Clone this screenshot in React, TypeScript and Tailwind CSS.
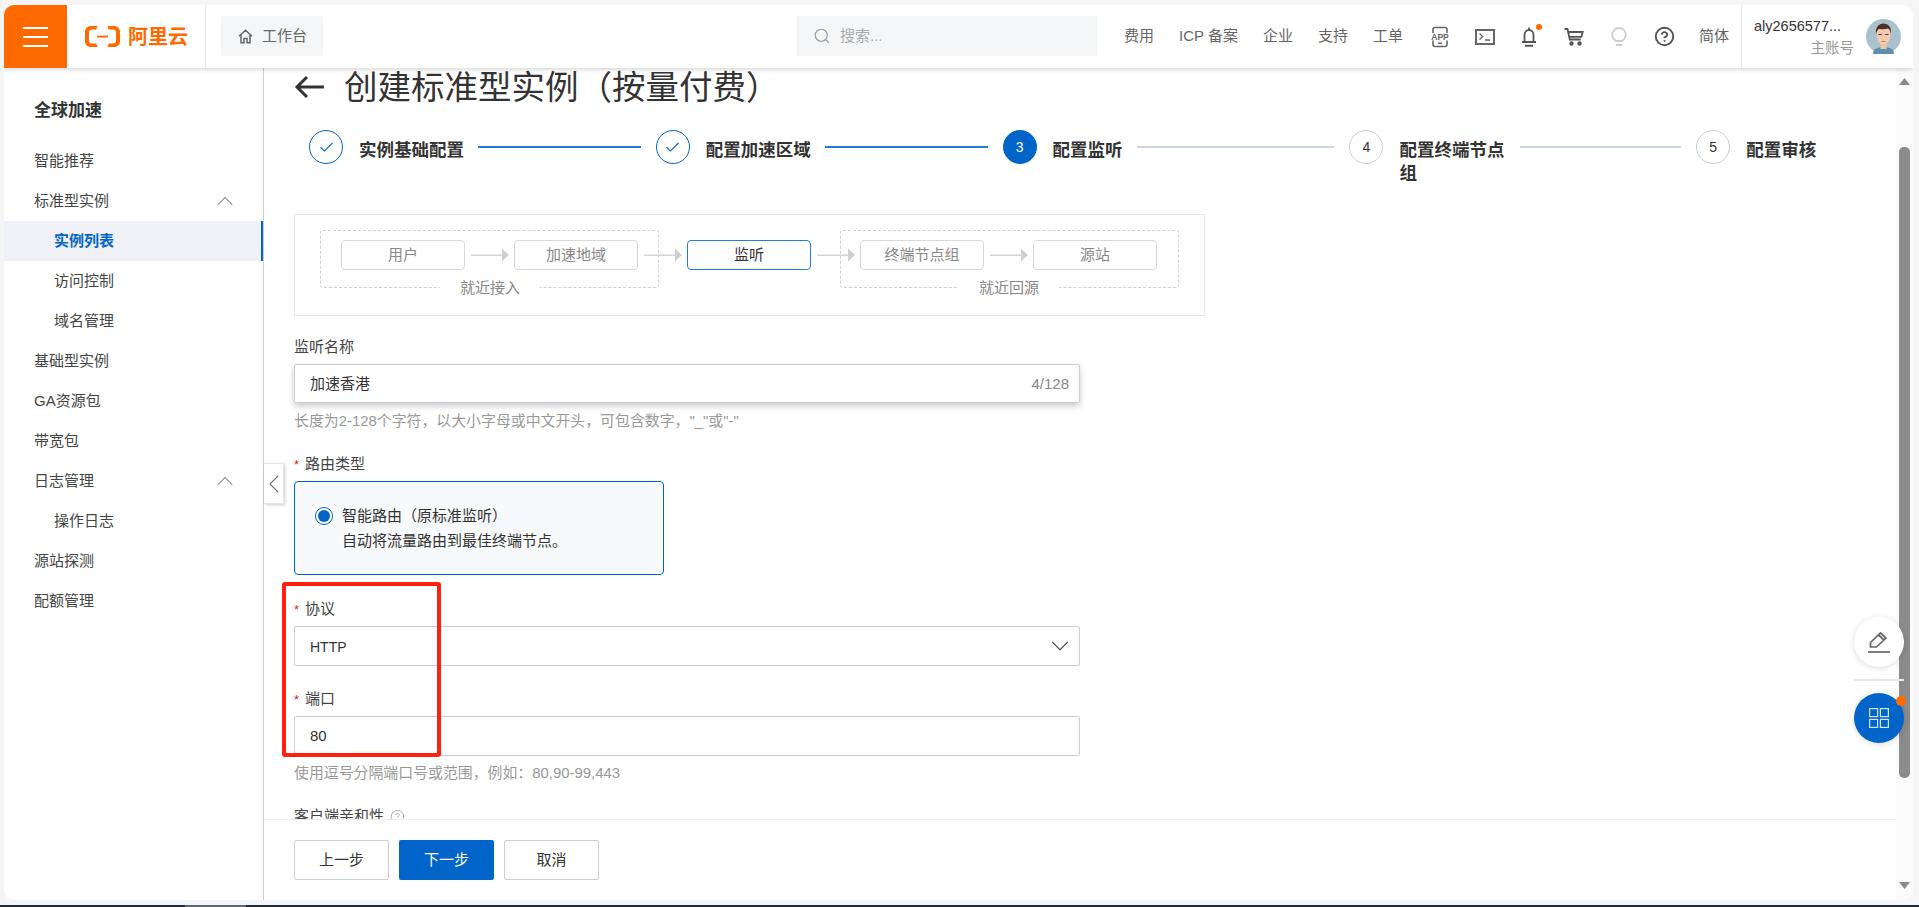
import { Check, ChevronDown, ChevronLeft, ChevronUp, CircleHelp, Search } from 'lucide-react';

const sideItems = [
  { label: '智能推荐' },
  { label: '标准型实例', open: true },
  { label: '实例列表', sub: true, active: true },
  { label: '访问控制', sub: true },
  { label: '域名管理', sub: true },
  { label: '基础型实例' },
  { label: 'GA资源包' },
  { label: '带宽包' },
  { label: '日志管理', open: true },
  { label: '操作日志', sub: true },
  { label: '源站探测' },
  { label: '配额管理' },
];

const steps = [
  { label: '实例基础配置', state: 'done' },
  { label: '配置加速区域', state: 'done' },
  { label: '配置监听', state: 'current', num: 3 },
  { label: '配置终端节点组', state: 'todo', num: 4 },
  { label: '配置审核', state: 'todo', num: 5 },
];

const flowNodes = ['用户', '加速地域', '监听', '终端节点组', '源站'];

function AliyunLogo() {
  return (
    <svg width="35" height="21" viewBox="0 0 35 21" fill="#ff6a00">
      <path d="M12.5 0H6C2.6 0 0 2.5 0 5.5v10C0 18.5 2.6 21 6 21h6.5l-1.2-3.4H7.2C5.4 17.6 4 16.4 4 15V6c0-1.4 1.4-2.6 3.2-2.6h4.1z" />
      <path d="M22.5 0H29c3.4 0 6 2.5 6 5.5v10c0 3-2.6 5.5-6 5.5h-6.5l1.2-3.4h4.1c1.8 0 3.2-1.2 3.2-2.6V6c0-1.4-1.4-2.6-3.2-2.6h-4.1z" />
      <rect x="12" y="9.6" width="11" height="1.9" />
    </svg>
  );
}

function HomeIcon() {
  return (
    <svg width="15" height="15" viewBox="0 0 15 15" fill="none" stroke="#666" strokeWidth="1.5">
      <path d="M1 7.2 7.5 1.2 14 7.2M3 6v7.8h3V9.5h3v4.3h3V6" />
    </svg>
  );
}

function AppIcon() {
  return (
    <svg width="22" height="22" viewBox="0 0 22 22" fill="none">
      <rect x="4" y="1.5" width="14" height="19" rx="2" stroke="#666" strokeWidth="1.6" />
      <rect x="0" y="7" width="22" height="7.500" fill="#fff" />
      <rect x="9" y="16.500" width="4" height="1.600" fill="#666" />
      <text x="11" y="14" textAnchor="middle" fontSize="8.500" fontWeight="700" fill="#666" fontFamily="Liberation Sans">APP</text>
    </svg>
  );
}

function TerminalIcon() {
  return (
    <svg width="20" height="16" viewBox="0 0 20 16" fill="none" stroke="#666">
      <rect x="1" y="1" width="18" height="14" strokeWidth="2" />
      <path d="m4.5 4.5 3.2 3-3.2 3" strokeWidth="1.3" />
      <path d="M10 11h5" strokeWidth="1.3" />
    </svg>
  );
}

function BellIcon() {
  return (
    <svg width="16" height="20" viewBox="0 0 16 20" fill="none" stroke="#555" strokeWidth="1.8">
      <path d="M8 0.500v2.500M3.500 14.500V8c0-3 2-5 4.500-5s4.500 2 4.500 5v6.500M1 15h14" />
      <path d="M4 18.800h8" strokeWidth="2" />
    </svg>
  );
}

function CartIcon() {
  return (
    <svg width="20" height="18" viewBox="0 0 20 18" fill="none" stroke="#555" strokeWidth="1.8">
      <path d="M0.500 1h3l2.300 10.500h11" />
      <path d="M4.200 4h14.500l-1.300 4.800H5.400" />
      <circle cx="7.500" cy="15.500" r="1.300" fill="#555" />
      <circle cx="15.500" cy="15.500" r="1.300" fill="#555" />
    </svg>
  );
}

function BulbIcon() {
  return (
    <svg width="16" height="20" viewBox="0 0 16 20" fill="none" stroke="#c9ced6" strokeWidth="1.8">
      <path d="M5 14C3 12.500 1.200 10.600 1.200 7.800 1.200 3.800 4.200 1 8 1s6.800 2.800 6.800 6.800c0 2.800-1.800 4.700-3.800 6.200z" />
      <path d="M5 18h6" />
    </svg>
  );
}

function Avatar() {
  return (
    <svg width="35" height="35" viewBox="0 0 35 35">
      <circle cx="17.500" cy="17.500" r="17.500" fill="#a9c2cd" />
      <path d="M7 35c0-5 4-7 10.500-7S28 30 28 35z" fill="#5f8fb0" />
      <rect x="14.500" y="23" width="6" height="7" fill="#f1c3a5" />
      <ellipse cx="17.500" cy="16" rx="7" ry="9.500" fill="#f5c9ad" />
      <path d="M10 15c-.8-7 3-10.500 7.500-10.500S25.800 8 25 15c-.6-3-1.500-5-3-5.500-2.500 1-6 1-8.500.2-1.500.8-2.800 2.300-3.500 5.300z" fill="#4a2f24" />
      <rect x="12.500" y="15" width="3.200" height="1" fill="#4a2f24" />
      <rect x="19.300" y="15" width="3.200" height="1" fill="#4a2f24" />
      <rect x="15.500" y="22" width="4" height="0.800" fill="#b5705a" />
    </svg>
  );
}

function Arrow() {
  return (
    <svg className="mx-[5.5px] shrink-0" width="38" height="14" viewBox="0 0 38 14">
      <rect x="0" y="6.500" width="32" height="1.500" fill="#d4d4d4" />
      <polygon points="31,0.500 38,7 31,13.500" fill="#cfcfcf" />
    </svg>
  );
}

function Required({ children }: { children: string }) {
  return (
    <div className="flex items-center h-[20px] pt-[2px] text-[15px] text-[#444]">
      <span className="text-[#e0202a] mr-[6px] text-[13px] leading-none">*</span>
      {children}
    </div>
  );
}

export default function App() {
  return (
    <div
      className="relative w-screen h-screen overflow-hidden bg-[#f5f5f5] flex flex-col text-[15px] text-[#333]"
      style={{ fontFamily: '"Liberation Sans", "Noto Sans CJK SC", sans-serif' }}
    >
      <div className="mt-[5px] ml-[4px] w-[1909px] h-[895px] shrink-0 bg-white rounded-[10px] overflow-hidden flex flex-col">
        {/* Top bar */}
        <header className="relative z-20 h-[63px] shrink-0 bg-white flex items-stretch shadow-[0_1px_5px_rgba(0,0,0,0.2)]">
          <div className="w-[63px] bg-[#ff6a00] flex flex-col justify-center items-center gap-[7px]">
            <span className="block w-[25px] h-[2px] bg-white" />
            <span className="block w-[25px] h-[2px] bg-white" />
            <span className="block w-[25px] h-[2px] bg-white" />
          </div>
          <div className="w-[139px] border-r border-[#e8e8e8] flex items-center pl-[18px] gap-[8px]">
            <AliyunLogo />
            <span className="text-[20px] leading-none font-bold text-[#ff6a00]">阿里云</span>
          </div>
          <div className="ml-[15px] mt-[11px] w-[102px] h-[40px] bg-[#f4f5f7] rounded-[3px] flex items-center pl-[17px] gap-[9px] text-[#666]">
            <HomeIcon />
            工作台
          </div>
          <div className="ml-[474px] mt-[11px] w-[300px] h-[40px] bg-[#f4f5f7] flex items-center pl-[16px] gap-[9px] text-[#aaa]">
            <Search size={18} strokeWidth={1.5} color="#999" />
            搜索...
          </div>
          <nav className="ml-[27px] flex items-center text-[#666]">
            <div className="flex gap-[25px] whitespace-nowrap mr-[15px]">
              <span>费用</span>
              <span>ICP 备案</span>
              <span>企业</span>
              <span>支持</span>
              <span>工单</span>
            </div>
            <div className="w-[45px] flex justify-center"><AppIcon /></div>
            <div className="w-[44px] flex justify-center"><TerminalIcon /></div>
            <div className="relative w-[45px] flex justify-center">
              <BellIcon />
              <span className="absolute left-[29px] -top-[3px] w-[6px] h-[6px] rounded-full bg-[#ff6a00]" />
            </div>
            <div className="w-[45px] flex justify-center"><CartIcon /></div>
            <div className="w-[45px] flex justify-center"><BulbIcon /></div>
            <div className="w-[45px] flex justify-center"><CircleHelp size={21} strokeWidth={2.2} color="#555" /></div>
            <span className="ml-[12px] whitespace-nowrap">简体</span>
          </nav>
          <div className="ml-[12px] flex-1 border-l border-[#e8e8e8] flex items-center pl-[12px] pr-[12px]">
            <div className="w-[100px] flex flex-col items-end">
              <span className="self-start text-[14.5px] text-[#333] leading-[20px] whitespace-nowrap">aly2656577...</span>
              <span className="text-[14.5px] text-[#999] leading-[20px] mt-[2px]">主账号</span>
            </div>
            <div className="ml-[12px]"><Avatar /></div>
          </div>
        </header>

        <div className="flex-1 flex min-h-0">
          {/* Sidebar */}
          <aside className="w-[260px] shrink-0 border-r border-[#c9ced6] pt-[28px]">
            <div className="pl-[30px] text-[17px] font-bold text-[#333] leading-[30px] mb-[15px]">全球加速</div>
            {sideItems.map((item) => (
              <div
                key={item.label}
                className={`relative h-[40px] flex items-center ${item.sub ? 'pl-[50px]' : 'pl-[30px]'} ${
                  item.active ? 'bg-[#eff1f6] text-[#0064c8] font-bold border-r-2 border-[#0064c8]' : 'text-[#444]'
                }`}
              >
                {item.label}
                {item.open && <ChevronUp className="absolute right-[24px]" size={28} strokeWidth={0.9} color="#777" />}
              </div>
            ))}
          </aside>

          {/* Main */}
          <main className="relative flex-1 flex min-w-0">
            <button className="absolute z-10 left-0 top-[395px] w-[20px] h-[41px] bg-white border border-l-0 border-[#e5e5e5] shadow-[1px_1px_3px_rgba(0,0,0,0.2)] flex items-center justify-center overflow-hidden">
              <ChevronLeft className="shrink-0" size={32} strokeWidth={0.8} color="#777" />
            </button>

            <div className="flex-1 min-w-0 flex flex-col">
              <div className="relative flex-1 min-h-0 overflow-hidden pl-[30px]">
                <div className="flex items-center h-[40px] -mt-[1px]">
                  <svg width="30" height="24" viewBox="0 0 30 24" fill="none" stroke="#333" strokeWidth="3">
                    <path d="M30 12H3M13 2 3 12l10 10" />
                  </svg>
                  <h1 className="ml-[20px] pt-[2px] text-[33.500px] font-normal leading-[40px] text-[#333] whitespace-nowrap">创建标准型实例（按量付费）</h1>
                </div>

                {/* Steps */}
                <div className="mt-[23px] ml-[15px] flex h-[59px]">
                  {steps.map((s, i) => (
                    <div key={s.label} className="w-[346.800px] shrink-0 flex items-start">
                      <div
                        className={`w-[34px] h-[34px] rounded-full shrink-0 flex items-center justify-center text-[14px] border ${
                          s.state === 'done'
                            ? 'border-[#0064c8]'
                            : s.state === 'current'
                              ? 'bg-[#0064c8] border-[#0064c8] text-white'
                              : 'border-[#c9ced6] text-[#333]'
                        }`}
                      >
                        {s.state === 'done' ? <Check size={17} strokeWidth={1.500} color="#0064c8" /> : s.num}
                      </div>
                      <div className="ml-[16px] mt-[9px] max-w-[107px] text-[17.500px] font-bold leading-[23px] text-[#333]">{s.label}</div>
                      {i < 4 && (
                        <div className={`flex-1 ml-[14px] mr-[15px] mt-[16px] h-[1.500px] ${i < 2 ? 'bg-[#1f7fd8]' : 'bg-[#cdd3dc]'}`} />
                      )}
                    </div>
                  ))}
                </div>

                {/* Flow diagram */}
                <div className="relative mt-[25px] w-[911px] h-[102px] border-[1.500px] border-[#e8e8e8] pl-[46px] pt-[25px]">
                  <div className="absolute left-[25px] top-[15px] w-[339px] h-[58px] border border-dashed border-[#cfcfcf] rounded-[3px]" />
                  <div className="absolute left-[545px] top-[15px] w-[339px] h-[58px] border border-dashed border-[#cfcfcf] rounded-[3px]" />
                  <span className="absolute left-[145px] top-[62px] w-[100px] h-[22px] leading-[22px] text-center bg-white text-[#888]">就近接入</span>
                  <span className="absolute left-[664px] top-[62px] w-[100px] h-[22px] leading-[22px] text-center bg-white text-[#888]">就近回源</span>
                  <div className="relative flex items-center">
                    {flowNodes.map((n, i) => (
                      <div key={n} className="flex items-center">
                        <div
                          className={`w-[124px] h-[30px] rounded-[4px] border-[1.500px] bg-white flex items-center justify-center ${
                            n === '监听' ? 'border-[#1f7fd8] text-[#333]' : 'border-[#d8d8d8] text-[#888]'
                          }`}
                        >
                          {n}
                        </div>
                        {i < 4 && <Arrow />}
                      </div>
                    ))}
                  </div>
                </div>

                {/* Form */}
                <div className="w-[786px]">
                  <div className="mt-[21px] h-[20px] leading-[20px] text-[#444]">监听名称</div>
                  <div className="mt-[7px] h-[39px] pt-[2px] border border-[#c9ced6] rounded-[2px] shadow-[0_3px_6px_rgba(0,0,0,0.22)] flex items-center justify-between pl-[15px] pr-[10px]">
                    <span>加速香港</span>
                    <span className="text-[#888]">4/128</span>
                  </div>
                  <div className="mt-[8px] h-[20px] leading-[20px] text-[14.900px] text-[#999] whitespace-nowrap">长度为2-128个字符，以大小字母或中文开头，可包含数字，"_"或"-"</div>

                  <div className="mt-[22px]"><Required>路由类型</Required></div>
                  <div className="mt-[8px] w-[370px] h-[94px] border-[1.500px] border-[#0064c8] rounded-[4px] bg-[#f7f9fb] pl-[20px] pt-[22px]">
                    <div className="flex items-center h-[24px]">
                      <span className="w-[18px] h-[18px] rounded-full border border-[#0064c8] bg-white flex items-center justify-center">
                        <span className="w-[12px] h-[12px] rounded-full bg-[#0064c8]" />
                      </span>
                      <span className="ml-[9px] text-[#333]">智能路由（原标准监听）</span>
                    </div>
                    <div className="pl-[27px] mt-[1px] h-[24px] leading-[24px] text-[#333]">自动将流量路由到最佳终端节点。</div>
                  </div>

                  <div className="mt-[23px]"><Required>协议</Required></div>
                  <div className="mt-[8px] h-[40px] border border-[#c9ced6] rounded-[2px] flex items-center justify-between pl-[15px] pr-[4px]">
                    <span className="text-[14px] pt-[2px]">HTTP</span>
                    <ChevronDown size={30} strokeWidth={0.9} color="#555" />
                  </div>

                  <div className="mt-[22px]"><Required>端口</Required></div>
                  <div className="mt-[8px] h-[40px] border border-[#c9ced6] rounded-[2px] flex items-center pl-[15px]">80</div>
                  <div className="mt-[7px] h-[20px] leading-[20px] text-[14.900px] text-[#999] whitespace-nowrap">使用逗号分隔端口号或范围，例如：80,90-99,443</div>

                  <div className="mt-[23px] flex items-center gap-[6px] h-[20px] text-[#444]">
                    客户端亲和性
                    <CircleHelp size={15} strokeWidth={1} color="#888" />
                  </div>
                </div>

                {/* Annotation drawn over the screenshot */}
                <div className="absolute left-[18px] top-[514px] w-[159px] h-[175px] border-[4px] border-[#ff2010] rounded-[3px] pointer-events-none" />
              </div>

              {/* Footer */}
              <div className="h-[81px] shrink-0 border-t border-[#eee] pl-[30px] pt-[20px] flex gap-[10px] bg-white">
                <button className="w-[95px] h-[40px] border border-[#c9ced6] rounded-[2px] text-[#333]">上一步</button>
                <button className="w-[95px] h-[40px] bg-[#0064c8] rounded-[2px] text-white">下一步</button>
                <button className="w-[95px] h-[40px] border border-[#c9ced6] rounded-[2px] text-[#333]">取消</button>
              </div>
            </div>

            {/* Scrollbar */}
            <div className="w-[17px] shrink-0 bg-[#fafafa] flex flex-col items-center pt-[10px] pb-[11px]">
              <svg width="11" height="7" viewBox="0 0 11 7"><polygon points="5.500,0 11,7 0,7" fill="#8b8b8b" /></svg>
              <div className="mt-[62px] w-[11px] h-[631px] bg-[#8b8b8b] rounded-b-[5px] rounded-t-[5px]" />
              <div className="flex-1" />
              <svg width="11" height="7" viewBox="0 0 11 7"><polygon points="0,0 11,0 5.500,7" fill="#8b8b8b" /></svg>
            </div>

            {/* Floating buttons */}
            <div className="absolute z-10 left-[1590px] top-[549px] w-[50px] flex flex-col">
              <div className="w-[50px] h-[50px] rounded-full bg-white shadow-[0_1px_6px_rgba(0,0,0,0.15)] flex items-center justify-center">
                <svg width="24" height="24" viewBox="0 0 24 24" fill="none" stroke="#666" strokeWidth="1.700">
                  <path d="M3.500 17v-4.500L13.500 3l5.500 5-9.500 9zM11.500 5l5.500 5" />
                  <path d="M1 22h22" />
                </svg>
              </div>
              <div className="mt-[12px] h-[1.500px] bg-[#e6e8ee]" />
              <div className="relative mt-[12px] w-[50px] h-[50px] rounded-full bg-[#0064c8] shadow-[0_1px_6px_rgba(0,0,0,0.15)] flex items-center justify-center">
                <svg width="20" height="20" viewBox="0 0 20 20" fill="none" stroke="#d3e4f7" strokeWidth="1.200">
                  <rect x="0.600" y="0.600" width="8" height="8" />
                  <rect x="11.400" y="0.600" width="8" height="8" />
                  <rect x="0.600" y="11.400" width="8" height="8" />
                  <rect x="11.400" y="11.400" width="8" height="8" />
                </svg>
                <span className="absolute right-[-2px] top-[3px] w-[10px] h-[10px] rounded-full bg-[#ff6a00]" />
              </div>
            </div>
          </main>
        </div>
      </div>

      {/* Taskbar edge */}
      <div className="absolute left-0 right-0 bottom-0 h-[2px] bg-[#1e2b38]">
        <div className="ml-[185px] w-[61px] h-full bg-[#5d6770]" />
      </div>
    </div>
  );
}
